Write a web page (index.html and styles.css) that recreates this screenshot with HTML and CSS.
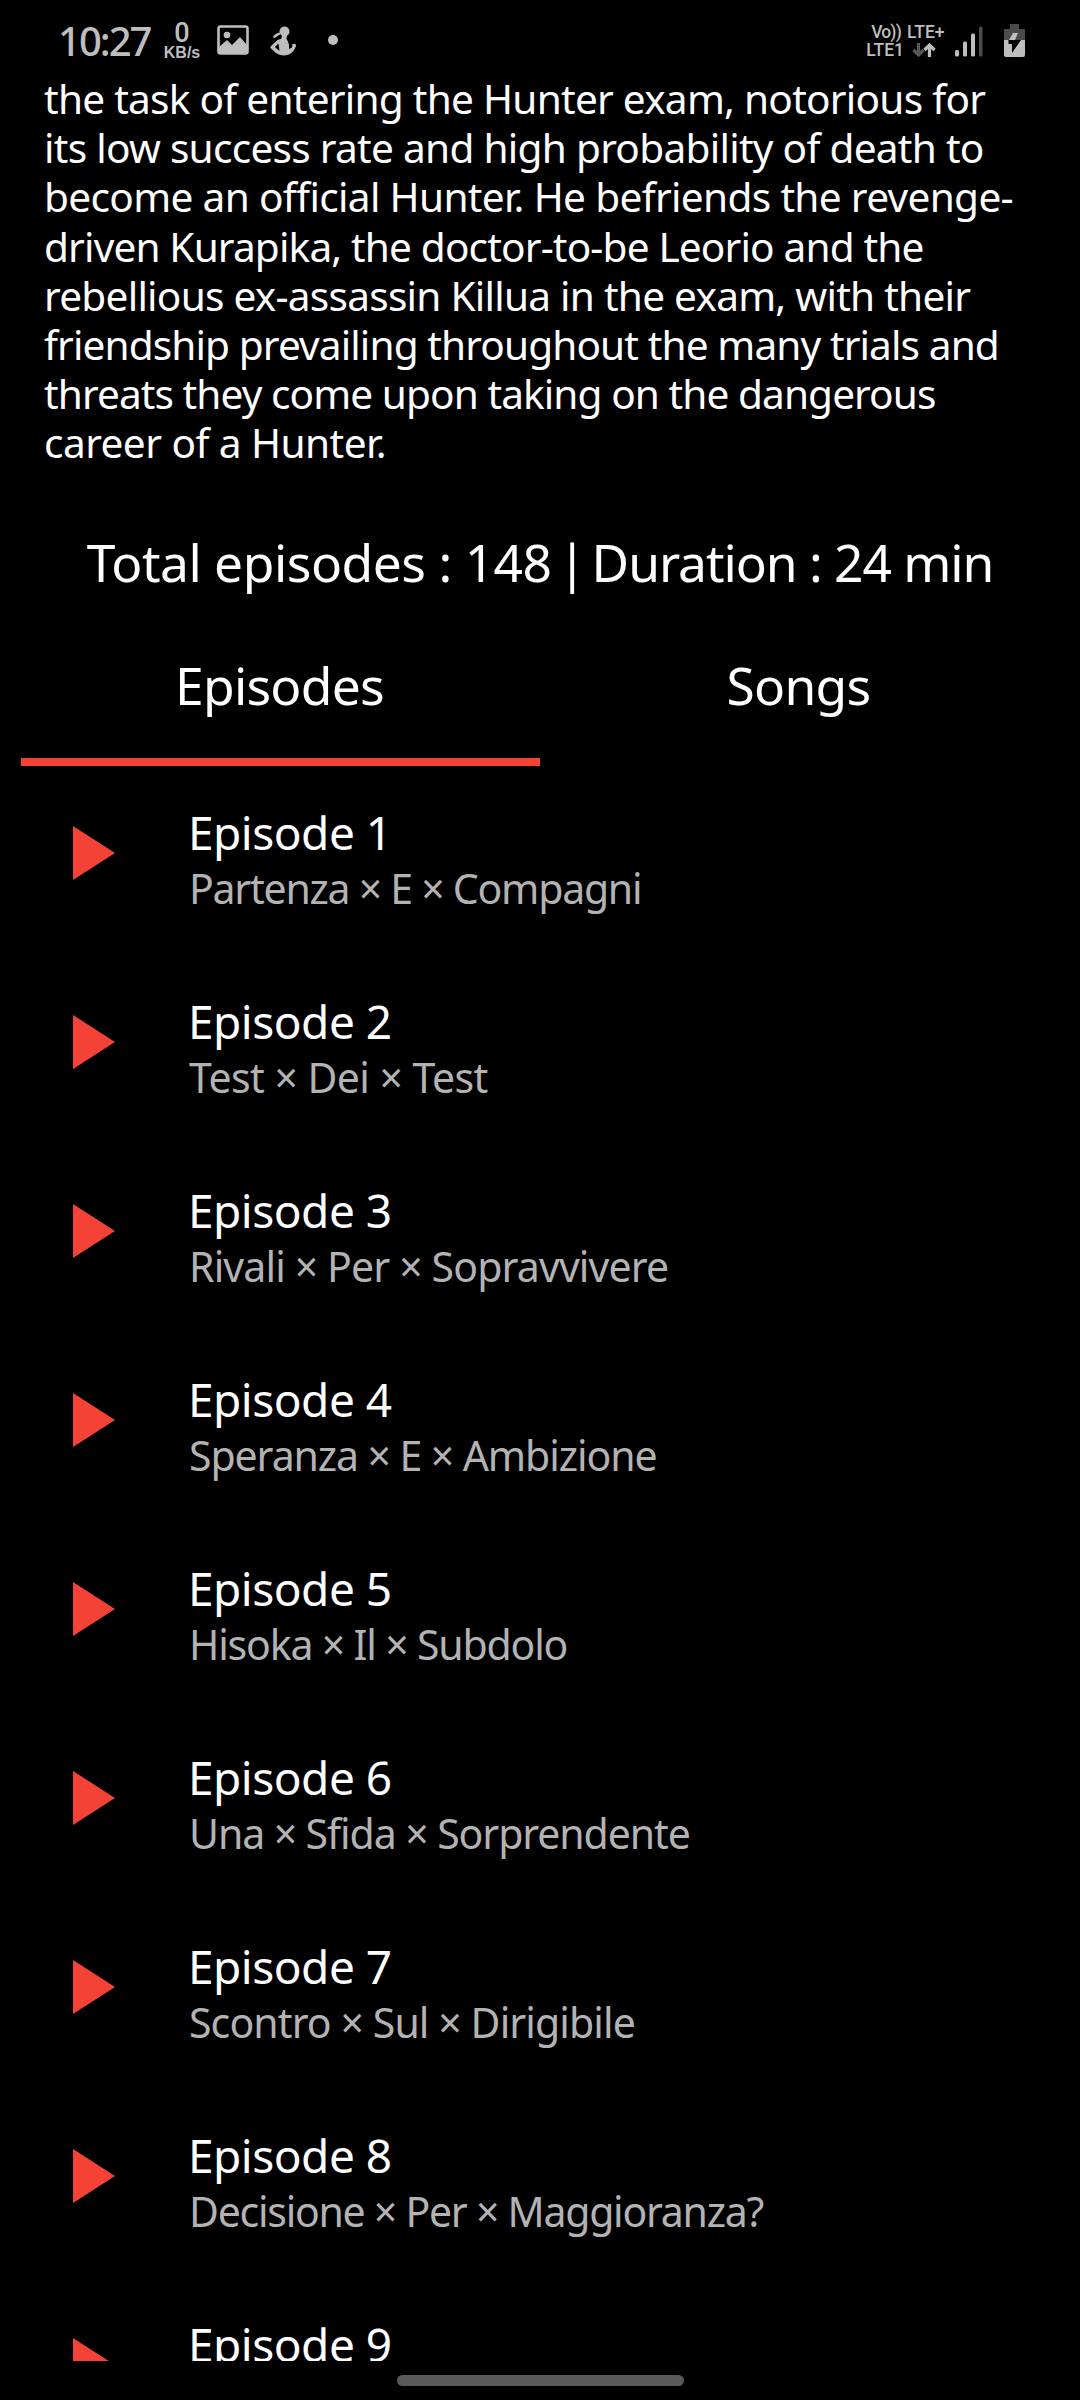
FILE: index.html
```
<!DOCTYPE html>
<html lang="en">
<head>
<meta charset="utf-8">
<title>Episodes</title>
<link rel="stylesheet" href="styles.css">
</head>
<body>
<div class="screen">
  <header class="status">
    <span class="clock">10:27</span>
    <span class="speed"><b>0</b><small>KB/s</small></span>
    <svg class="picture" width="32" height="30" viewBox="0 0 32 30"><rect x="1.5" y="1.500" width="29" height="27" rx="2" fill="none" stroke="#bebebe" stroke-width="2.600"/><circle cx="10" cy="10" r="3.300" fill="#bebebe"/><path d="M2 22 L10 15 L15 20 L23 12 L30 20 V28 H2Z" fill="#bebebe"/></svg>
    <svg class="figure" width="28" height="32" viewBox="0 0 28 32" fill="#bebebe"><circle cx="15.500" cy="6.500" r="5"/><path d="M13 9 H18 L17.500 14 Q20.500 18 20 24 L23 22.500 L23.500 19 Q27.500 18 27 21 Q25 27 20 29.500 Q12 32 7 28 L1.500 23 Q1 22 2 21 L8.500 15 L12.500 13.500Z"/><path d="M4 12 Q6 8 11 7.500 L11 9.500 L5.500 13Z"/><path d="M9.500 18.500 L5.800 22 L10.500 26Z" fill="#000"/></svg>
    <i class="dot"></i>
    <span class="volte"><span>Vo))</span><span>LTE1</span></span>
    <span class="lte"><span>LTE+</span>
      <svg width="24" height="14" viewBox="0 0 24 14" fill="none" stroke-width="3.200"><path d="M6.500 0V11M1.500 7L6.500 12L11.500 7" stroke="#595959"/><path d="M17.500 14V3M12.500 7L17.500 2L22.500 7" stroke="#bebebe"/></svg></span>
    <svg class="signal" width="28" height="31" viewBox="0 0 28 31" fill="#bebebe"><rect y="24" width="4" height="6.500" rx="1.500"/><rect x="8" y="15.500" width="4" height="15" rx="1.500"/><rect x="16" y="7.500" width="4" height="23" rx="1.500"/><rect x="24" y="0.500" width="3.500" height="30" rx="1.500" fill="#4b4b4b"/></svg>
    <svg class="battery" width="21" height="33" viewBox="0 0 21 33"><path d="M6 0H15V5H20Q21 5 21 6V16H0V6Q0 5 1 5H6Z" fill="#4b4b4b"/><path d="M0 16H21V31Q21 33 19 33H2Q0 33 0 31Z" fill="#bebebe"/><path d="M9 9H14L11 16H5Z" fill="#bebebe"/><path d="M4.500 16H17L8 29V20H4.500Z" fill="#000"/></svg>
  </header>
  <main class="content">
    <p class="synopsis">
      <span class="line l1">the task of entering the Hunter exam, notorious for</span>
      <span class="line l2">its low success rate and high probability of death to</span>
      <span class="line l3">become an official Hunter. He befriends the revenge-</span>
      <span class="line l4">driven Kurapika, the doctor-to-be Leorio and the</span>
      <span class="line l5">rebellious ex-assassin Killua in the exam, with their</span>
      <span class="line l6">friendship prevailing throughout the many trials and</span>
      <span class="line l7">threats they come upon taking on the dangerous</span>
      <span class="line l8">career of a Hunter.</span>
    </p>
    <h1 class="summary"><span class="total">Total episodes : 148</span><span class="bar"> | </span><span>Duration : 24 min</span></h1>
    <nav class="tabs"><span class="tab active">Episodes</span><span class="tab">Songs</span></nav>
    <ul class="episodes">
      <li class="episode"><svg class="play" viewBox="0 0 42 54"><path d="M0 0L42 27L0 54Z"/></svg><div><h2>Episode 1</h2><p class="e1">Partenza × E × Compagni</p></div></li>
      <li class="episode"><svg class="play" viewBox="0 0 42 54"><path d="M0 0L42 27L0 54Z"/></svg><div><h2>Episode 2</h2><p class="e2">Test × Dei × Test</p></div></li>
      <li class="episode"><svg class="play" viewBox="0 0 42 54"><path d="M0 0L42 27L0 54Z"/></svg><div><h2>Episode 3</h2><p class="e3">Rivali × Per × Sopravvivere</p></div></li>
      <li class="episode"><svg class="play" viewBox="0 0 42 54"><path d="M0 0L42 27L0 54Z"/></svg><div><h2>Episode 4</h2><p class="e4">Speranza × E × Ambizione</p></div></li>
      <li class="episode"><svg class="play" viewBox="0 0 42 54"><path d="M0 0L42 27L0 54Z"/></svg><div><h2>Episode 5</h2><p class="e5">Hisoka × Il × Subdolo</p></div></li>
      <li class="episode"><svg class="play" viewBox="0 0 42 54"><path d="M0 0L42 27L0 54Z"/></svg><div><h2>Episode 6</h2><p class="e6">Una × Sfida × Sorprendente</p></div></li>
      <li class="episode"><svg class="play" viewBox="0 0 42 54"><path d="M0 0L42 27L0 54Z"/></svg><div><h2>Episode 7</h2><p class="e7">Scontro × Sul × Dirigibile</p></div></li>
      <li class="episode"><svg class="play" viewBox="0 0 42 54"><path d="M0 0L42 27L0 54Z"/></svg><div><h2>Episode 8</h2><p class="e8">Decisione × Per × Maggioranza?</p></div></li>
      <li class="episode"><svg class="play" viewBox="0 0 42 54"><path d="M0 0L42 27L0 54Z"/></svg><div><h2>Episode 9</h2></div></li>
    </ul>
  </main>
  <footer class="gesture"><i class="pill"></i></footer>
</div>
</body>
</html>
```
FILE: styles.css
```
* { box-sizing: border-box; margin: 0; padding: 0; }
body { background: #000; color: #fff; font-family: "Noto Sans", sans-serif; }
.screen { width: 1080px; height: 2400px; overflow: hidden; display: flex; flex-direction: column; background: #000; }

.status { height: 73px; flex: none; display: flex; align-items: flex-start; color: #bebebe; font-family: Roboto, sans-serif; }
.clock { margin: 20px 0 0 58px; width: 93px; font: 500 40px/42px "Noto Sans", sans-serif; letter-spacing: -2px; white-space: nowrap; }
.speed { margin: 20px 0 0 12px; width: 38px; display: flex; flex-direction: column; align-items: center; }
.speed b { font: 500 27px/26px Roboto, sans-serif; }
.speed small { font: bold 16px/14px "Liberation Sans", sans-serif; }
.picture { margin: 25px 0 0 16px; }
.figure { margin: 25px 0 0 20px; }
.dot { margin: 35px 0 0 31px; width: 10px; height: 10px; border-radius: 50%; background: #bebebe; }
.volte, .lte { display: flex; flex-direction: column; font-weight: 500; font-size: 17.500px; line-height: 18px; white-space: nowrap; }
.volte { margin: 23px 0 0 526px; width: 40px; align-items: flex-end; }
.volte span:first-child { margin-right: 3px; letter-spacing: -0.800px; }
.lte { margin: 23px 0 0 3px; width: 38px; }
.lte svg { margin: 2px 0 0 5px; }
.signal { margin: 26px 0 0 10px; }
.battery { margin: 24px 0 0 21px; }

.content { height: 2288px; flex: none; overflow: hidden; }
.synopsis { padding: 1px 0 0 44px; font-size: 40.600px; line-height: 49.200px; }
.line { display: block; white-space: nowrap; }
.l1 { letter-spacing: -0.750px; }
.l2 { letter-spacing: -0.730px; }
.l3 { letter-spacing: -0.670px; }
.l4 { letter-spacing: -0.850px; }
.l5 { letter-spacing: -0.750px; }
.l6 { letter-spacing: -0.890px; }
.l7 { letter-spacing: -0.920px; }
.l8 { letter-spacing: -0.550px; }
.summary { margin-top: 64px; text-align: center; font-weight: 400; font-size: 51.500px; line-height: 60px; letter-spacing: -1.050px; white-space: nowrap; }
.total { letter-spacing: -0.480px; }
.bar { margin: 0 -6px; }
.tabs { display: flex; margin: 63px 21px 0; height: 111px; font-size: 51.500px; line-height: 60px; text-align: center; }
.tab { flex: 1; padding-right: 2px; letter-spacing: -0.750px; }
.tab.active { border-bottom: 8px solid #f44336; }

.episodes { list-style: none; padding-top: 39px; }
.episode { display: flex; height: 189px; }
.play { width: 42px; height: 54px; margin: 21px 73px 0 73px; fill: #f44336; flex: none; }
.episode h2 { font-weight: 400; font-size: 46px; line-height: 55px; letter-spacing: -0.500px; }
.episode p { margin: 3px 0 0 1px; color: #b3b3b3; font-size: 41px; line-height: 50px; white-space: nowrap; }
.e1 { letter-spacing: -1.250px; }
.e2 { letter-spacing: -0.550px; }
.e3 { letter-spacing: -0.860px; }
.e4 { letter-spacing: -1.080px; }
.e5 { letter-spacing: -1.170px; }
.e6 { letter-spacing: -1.080px; }
.e7 { letter-spacing: -0.900px; }
.e8 { letter-spacing: -1.260px; }

.gesture { flex: 1; display: flex; justify-content: center; padding-top: 14px; }
.pill { width: 287px; height: 11px; border-radius: 6px; background: #5a5a5a; }
```
